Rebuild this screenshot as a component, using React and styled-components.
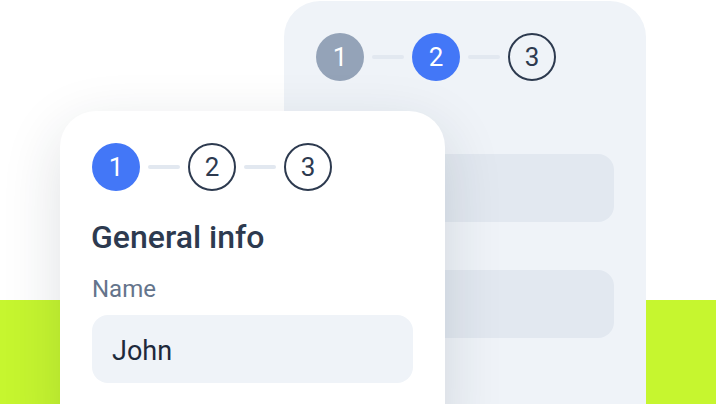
import React from 'react';
import styled, { createGlobalStyle } from 'styled-components';

const GlobalStyle = createGlobalStyle`
  html, body {
    margin: 0;
    padding: 0;
    background: #ffffff;
    overflow: hidden;
  }
  * {
    box-sizing: border-box;
  }
`;

const Stage = styled.div`
  position: relative;
  width: 716px;
  height: 404px;
  overflow: hidden;
  padding: 1px 0 0 284px;
  font-family: Roboto, 'Noto Sans', sans-serif;
  background: linear-gradient(to bottom, #ffffff 0, #ffffff 300px, #c6f62f 300px);
`;

const Card = styled.div`
  display: flex;
  flex-direction: column;
  padding: 32px;
  border-radius: 36px;
  background: ${props => (props.front ? '#ffffff' : '#eff3f8')};
`;

const BackCard = styled(Card)`
  width: 362px;
  height: 440px;
`;

const FrontCard = styled(Card)`
  position: absolute;
  left: 60px;
  top: 111px;
  width: 385px;
  height: 340px;
  padding-left: 31px;
  box-shadow: 0 18px 60px rgba(30, 41, 59, 0.14);
`;

const Stepper = styled.div`
  display: flex;
  align-items: center;
  gap: 8px;
  margin-left: ${props => (props.front ? 1 : 0)}px;
`;

const Step = styled.div`
  width: 48px;
  height: 48px;
  border-radius: 50%;
  display: flex;
  align-items: center;
  justify-content: center;
  font-size: 26px;
  line-height: 1;
  color: ${props => (props.state === 'todo' ? '#2d3a4f' : '#ffffff')};
  background: ${props =>
    props.state === 'done' ? '#94a3b8' : props.state === 'active' ? '#4377f7' : 'transparent'};
  border: ${props => (props.state === 'todo' ? '2px solid #2d3a4f' : 'none')};
`;

const Connector = styled.div`
  width: 32px;
  height: 4px;
  border-radius: 2px;
  background: #e2e8f0;
`;

const Title = styled.h2`
  margin: 27px 0 0;
  font-size: 32px;
  line-height: 38px;
  font-weight: 500;
  color: #2d3a4f;
`;

const Label = styled.div`
  margin: 19px 0 0 1px;
  font-size: 24px;
  line-height: 28px;
  color: #64748b;
`;

const Field = styled.div`
  height: 68px;
  margin-top: ${props => props.gap || 12}px;
  margin-left: ${props => (props.muted ? 0 : 1)}px;
  border-radius: 16px;
  background: ${props => (props.muted ? '#e2e8f0' : '#eff3f8')};
  display: flex;
  align-items: center;
  padding: 3px 20px 0;
  font-size: 27px;
  line-height: 32px;
  color: #1e293b;
`;

const steps = (states) =>
  states.map((state, i) => (
    <React.Fragment key={i}>
      {i > 0 && <Connector />}
      <Step state={state}>{i + 1}</Step>
    </React.Fragment>
  ));

export default function App() {
  return (
    <>
      <GlobalStyle />
      <Stage>
        <BackCard>
          <Stepper>{steps(['done', 'active', 'todo'])}</Stepper>
          <Field muted gap={73} />
          <Field muted gap={48} />
        </BackCard>
        <FrontCard front>
          <Stepper front>{steps(['active', 'todo', 'todo'])}</Stepper>
          <Title>General info</Title>
          <Label>Name</Label>
          <Field>John</Field>
        </FrontCard>
      </Stage>
    </>
  );
}
